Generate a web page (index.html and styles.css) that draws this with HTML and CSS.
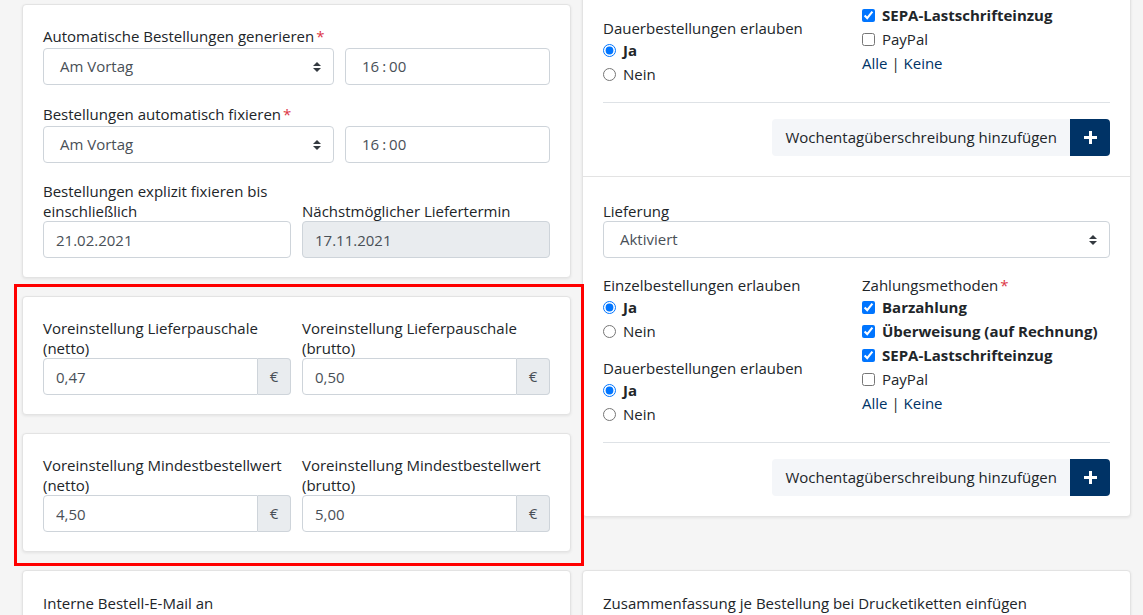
FILE: index.html
```html
<!DOCTYPE html>
<html lang="de">
<head>
<meta charset="UTF-8">
<title>Einstellungen Bestellungen</title>
<link rel="stylesheet" href="styles.css">
</head>
<body>
<div class="page">

    <div class="row">
        <!-- linke Spalte -->
        <div class="stack">
            <div class="card">
                <div class="form-group">
                    <label>Automatische Bestellungen generieren<span class="req">*</span></label>
                    <div class="field-row">
                        <div class="select">
                            <span>Am Vortag</span>
                            <svg class="caret" width="8" height="10" viewBox="0 0 4 5"><path d="M2 0L0 2h4zm0 5L0 3h4z"/></svg>
                        </div>
                        <div class="time">16<span class="colon">:</span>00</div>
                    </div>
                </div>
                <div class="form-group">
                    <label>Bestellungen automatisch fixieren<span class="req">*</span></label>
                    <div class="field-row">
                        <div class="select">
                            <span>Am Vortag</span>
                            <svg class="caret" width="8" height="10" viewBox="0 0 4 5"><path d="M2 0L0 2h4zm0 5L0 3h4z"/></svg>
                        </div>
                        <div class="time">16<span class="colon">:</span>00</div>
                    </div>
                </div>
                <div class="pair">
                    <div class="pair-col">
                        <label>Bestellungen explizit fixieren bis einschließlich</label>
                        <input class="input" type="text" value="21.02.2021">
                    </div>
                    <div class="pair-col">
                        <label>Nächstmöglicher Liefertermin</label>
                        <input class="input" type="text" value="17.11.2021" readonly>
                    </div>
                </div>
            </div>

            <div class="marked">
                <div class="card">
                    <div class="pair">
                        <div class="pair-col">
                            <label>Voreinstellung Lieferpauschale (netto)</label>
                            <div class="input-group">
                                <input class="input" type="text" value="0,47">
                                <span class="addon">€</span>
                            </div>
                        </div>
                        <div class="pair-col">
                            <label>Voreinstellung Lieferpauschale (brutto)</label>
                            <div class="input-group">
                                <input class="input" type="text" value="0,50">
                                <span class="addon">€</span>
                            </div>
                        </div>
                    </div>
                </div>
                <div class="card">
                    <div class="pair">
                        <div class="pair-col">
                            <label>Voreinstellung Mindestbestellwert (netto)</label>
                            <div class="input-group">
                                <input class="input" type="text" value="4,50">
                                <span class="addon">€</span>
                            </div>
                        </div>
                        <div class="pair-col">
                            <label>Voreinstellung Mindestbestellwert (brutto)</label>
                            <div class="input-group">
                                <input class="input" type="text" value="5,00">
                                <span class="addon">€</span>
                            </div>
                        </div>
                    </div>
                </div>
            </div>
        </div>

        <!-- rechte Spalte -->
        <div class="card sections pulled">
            <div class="section">
                <label>Abholung</label>
                <div class="select">
                    <span>Aktiviert</span>
                    <svg class="caret" width="8" height="10" viewBox="0 0 4 5"><path d="M2 0L0 2h4zm0 5L0 3h4z"/></svg>
                </div>
                <div class="options">
                    <div>
                        <div class="group">
                            <label>Einzelbestellungen erlauben</label>
                            <div class="check"><input type="radio" name="a1" checked><b>Ja</b></div>
                            <div class="check"><input type="radio" name="a1">Nein</div>
                        </div>
                        <div class="group">
                            <label>Dauerbestellungen erlauben</label>
                            <div class="check"><input type="radio" name="a2" checked><b>Ja</b></div>
                            <div class="check"><input type="radio" name="a2">Nein</div>
                        </div>
                    </div>
                    <div class="group">
                        <label>Zahlungsmethoden<span class="req">*</span></label>
                        <div class="check"><input type="checkbox" checked><b>Barzahlung</b></div>
                        <div class="check"><input type="checkbox" checked><b>Überweisung (auf Rechnung)</b></div>
                        <div class="check"><input type="checkbox" checked><b>SEPA-Lastschrifteinzug</b></div>
                        <div class="check"><input type="checkbox">PayPal</div>
                        <div class="links"><a href="#">Alle</a> | <a href="#">Keine</a></div>
                    </div>
                </div>
                <hr>
                <div class="actions">
                    <span class="btn-label">Wochentagüberschreibung hinzufügen</span>
                    <button class="btn-add"><svg width="13" height="13" viewBox="0 0 13 13"><rect x="5" y="0" width="3" height="13"/><rect x="0" y="5" width="13" height="3"/></svg></button>
                </div>
            </div>
            <div class="section">
                <label>Lieferung</label>
                <div class="select">
                    <span>Aktiviert</span>
                    <svg class="caret" width="8" height="10" viewBox="0 0 4 5"><path d="M2 0L0 2h4zm0 5L0 3h4z"/></svg>
                </div>
                <div class="options">
                    <div>
                        <div class="group">
                            <label>Einzelbestellungen erlauben</label>
                            <div class="check"><input type="radio" name="l1" checked><b>Ja</b></div>
                            <div class="check"><input type="radio" name="l1">Nein</div>
                        </div>
                        <div class="group">
                            <label>Dauerbestellungen erlauben</label>
                            <div class="check"><input type="radio" name="l2" checked><b>Ja</b></div>
                            <div class="check"><input type="radio" name="l2">Nein</div>
                        </div>
                    </div>
                    <div class="group">
                        <label>Zahlungsmethoden<span class="req">*</span></label>
                        <div class="check"><input type="checkbox" checked><b>Barzahlung</b></div>
                        <div class="check"><input type="checkbox" checked><b>Überweisung (auf Rechnung)</b></div>
                        <div class="check"><input type="checkbox" checked><b>SEPA-Lastschrifteinzug</b></div>
                        <div class="check"><input type="checkbox">PayPal</div>
                        <div class="links"><a href="#">Alle</a> | <a href="#">Keine</a></div>
                    </div>
                </div>
                <hr>
                <div class="actions">
                    <span class="btn-label">Wochentagüberschreibung hinzufügen</span>
                    <button class="btn-add"><svg width="13" height="13" viewBox="0 0 13 13"><rect x="5" y="0" width="3" height="13"/><rect x="0" y="5" width="13" height="3"/></svg></button>
                </div>
            </div>
        </div>
    </div>

    <div class="row">
        <div class="card">
            <label>Interne Bestell-E-Mail an</label>
            <input class="input" type="text" value="">
        </div>
        <div class="card">
            <label>Zusammenfassung je Bestellung bei Drucketiketten einfügen</label>
            <input class="input" type="text" value="">
        </div>
    </div>

</div>
</body>
</html>
```
FILE: styles.css
```css
* {
    box-sizing: border-box;
}

body {
    margin: 0;
    font-family: "Open Sans", sans-serif;
    font-size: 15px;
    line-height: 20px;
    color: #212529;
    background-color: #f5f5f5;
}

.page {
    height: 615px;
    overflow: hidden;
    padding: 4px 12px 0 22px;
}

.row {
    display: grid;
    grid-template-columns: 549px 549px;
    column-gap: 11px;
    align-items: start;
    margin-bottom: 18px;
}

.stack {
    display: flex;
    flex-direction: column;
    gap: 18px;
}

/* Karten */
.card {
    background-color: #fff;
    border: 1px solid #e3e3e3;
    border-radius: 4px;
    box-shadow: 0 1px 3px rgba(0, 0, 0, 0.08);
    padding: 21px 20px 19px;
}

.row + .row .card {
    padding-top: 22px;
}

label {
    display: block;
    margin-bottom: 2px;
}

.req {
    color: #dc3545;
    margin-left: 2px;
}

.form-group {
    margin-bottom: 18px;
}

.form-group:first-child {
    margin-bottom: 19px;
}

.field-row {
    display: grid;
    grid-template-columns: 291px 1fr;
    column-gap: 11px;
}

.pair {
    display: grid;
    grid-template-columns: 1fr 1fr;
    column-gap: 11px;
    align-items: end;
}

.pair label {
    margin-bottom: 0;
}

/* Eingabefelder */
.input,
.select,
.time {
    display: block;
    width: 100%;
    height: 37px;
    border: 1px solid #ced4da;
    border-radius: 4px;
    background-color: #fff;
    color: #495057;
    font: inherit;
    line-height: 35px;
    padding: 0 12px;
    margin: 0;
}

.input[readonly] {
    background-color: #e9ecef;
}

.select {
    display: flex;
    align-items: center;
    justify-content: space-between;
    padding: 0 12px 0 16px;
}

.caret {
    fill: #343a40;
}

.time {
    padding-left: 16px;
}

.colon {
    margin: 0 3px;
}

.input-group {
    display: flex;
}

.input-group .input {
    flex: 1;
    border-radius: 4px 0 0 4px;
}

.addon {
    width: 33px;
    height: 37px;
    line-height: 35px;
    text-align: center;
    color: #495057;
    background-color: #e9ecef;
    border: 1px solid #ced4da;
    border-left: none;
    border-radius: 0 4px 4px 0;
}

/* roter Markierungsrahmen */
.marked {
    position: relative;
    display: flex;
    flex-direction: column;
    gap: 18px;
}

.marked::after {
    content: "";
    position: absolute;
    top: -12px;
    left: -8px;
    right: -13px;
    bottom: -14px;
    border: 3px solid #ff0000;
    z-index: 2;
}

/* rechte Karte mit Abschnitten */
.sections {
    padding: 0;
}

.pulled {
    margin-top: -168px;
}

.section {
    padding: 24px 20px 20px;
}

.section + .section {
    border-top: 1px solid #e3e3e3;
}

.section > label {
    margin-bottom: 0;
}

.options {
    display: grid;
    grid-template-columns: 1fr 1fr;
    column-gap: 11px;
    margin-top: 17px;
}

.group {
    margin-bottom: 15px;
}

.options .group:last-child {
    margin-bottom: 0;
}

.group label {
    margin-bottom: 0;
}

.check {
    display: flex;
    align-items: center;
    gap: 7px;
    height: 24px;
}

.check input {
    margin: 0;
}

.check b {
    font-weight: 700;
}

.links {
    height: 24px;
    line-height: 24px;
}

.links a {
    color: #003366;
    text-decoration: none;
}

hr {
    border: none;
    border-top: 1px solid #dee2e6;
    margin: 16px 0;
}

.actions {
    display: flex;
    justify-content: flex-end;
}

.btn-label {
    height: 37px;
    line-height: 37px;
    padding: 0 13px;
    background-color: #f4f6f9;
    border-radius: 4px 0 0 4px;
}

.btn-add {
    width: 40px;
    height: 37px;
    border: none;
    border-radius: 0 4px 4px 0;
    background-color: #003366;
    display: flex;
    align-items: center;
    justify-content: center;
    padding: 0;
    fill: #fff;
}
```
